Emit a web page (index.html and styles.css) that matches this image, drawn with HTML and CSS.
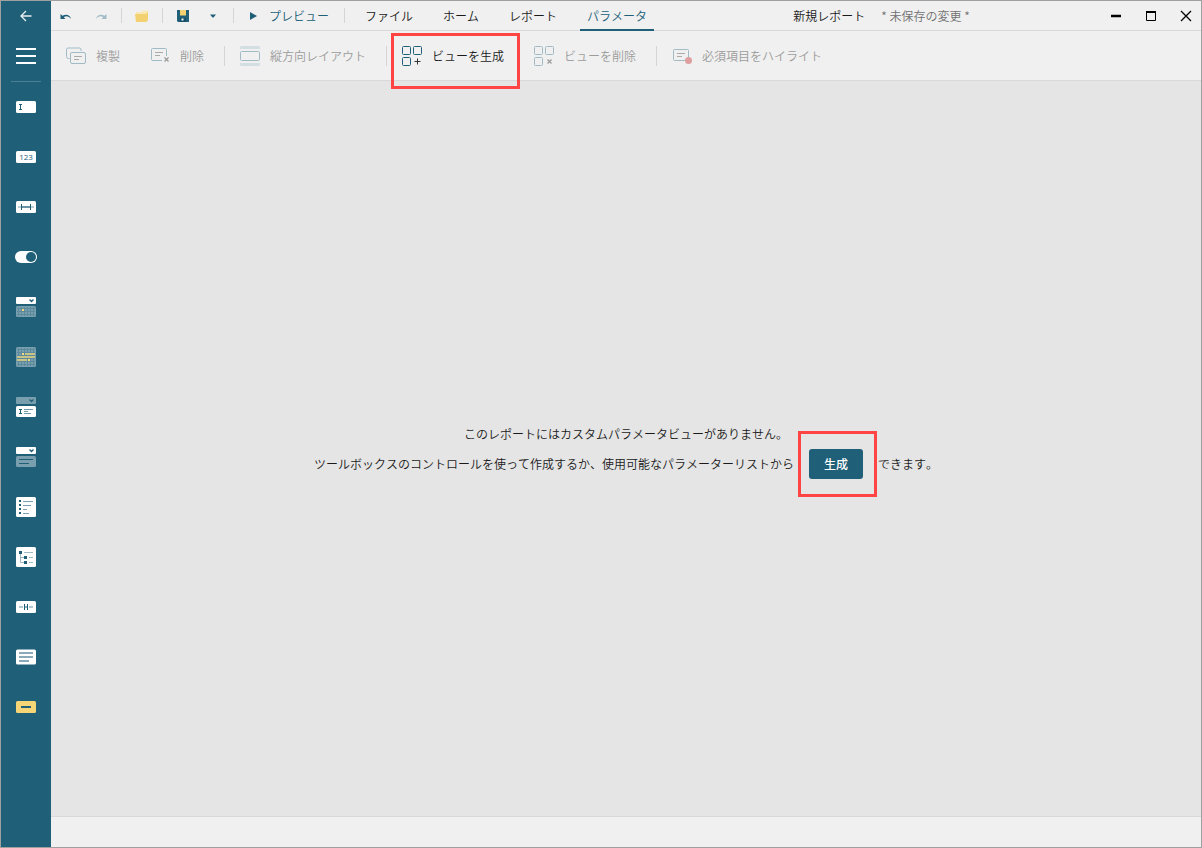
FILE: index.html
```html
<!DOCTYPE html>
<html lang="ja">
<head>
<meta charset="utf-8">
<title>新規レポート</title>
<meta name="viewport" content="width=device-width, initial-scale=1">
<link rel="stylesheet" href="styles.css">
</head>
<body>
<div class="app">
  <nav class="sidebar" aria-label="ツールボックス">
    <button class="back" type="button" aria-label="戻る">
      <svg width="12" height="12" viewBox="0 0 12 12" fill="none" stroke="#e8f0f3" stroke-width="1.3"><path d="M1 6h10.5M6 1L1 6l5 5"/></svg>
    </button>
    <button class="menu" type="button" aria-label="メニュー">
      <svg width="20" height="18" viewBox="0 0 20 18" fill="#fff"><path d="M0 1h20v2H0zM0 8h20v2H0zM0 15h20v2H0z"/></svg>
    </button>
    <hr class="divider">
    <button class="tool" type="button" aria-label="テキスト">
      <svg viewBox="0 0 22 22"><rect x="1" y="5" width="20" height="12" rx="1.5" fill="#fff"/><path d="M4 8.500h3M5.500 8.500v5M4 13.500h3" stroke="#205f78" fill="none"/></svg>
    </button>
    <button class="tool" type="button" aria-label="数値">
      <svg viewBox="0 0 22 22"><rect x="1" y="5" width="20" height="12" rx="1.5" fill="#fff"/><text class="digits" x="11" y="14" text-anchor="middle">123</text></svg>
    </button>
    <button class="tool" type="button" aria-label="範囲">
      <svg viewBox="0 0 22 22" fill="none"><rect x="1" y="5" width="20" height="12" rx="1.5" fill="#fff"/><path d="M3 11h16" stroke="#a5bfc9" stroke-width="1.5"/><path d="M6 11h10" stroke="#4d7f93" stroke-width="1.5"/><path d="M6.500 8v6M15.500 8v6" stroke="#205f78"/></svg>
    </button>
    <button class="tool" type="button" aria-label="ブール">
      <svg viewBox="0 0 22 22"><rect y="5" width="22" height="12" rx="6" fill="#fff"/><circle cx="16" cy="11" r="5" fill="#205f78"/></svg>
    </button>
    <button class="tool" type="button" aria-label="日付">
      <svg viewBox="0 0 22 22"><rect x="1" y="1" width="20" height="7" rx="1" fill="#fff"/><path d="M14.500 3.500l2 2 2-2" fill="none" stroke="#205f78" stroke-width="1.3"/><rect x="1" y="10" width="20" height="11" rx="1.5" fill="#799fae"/><path d="M2 12.500h18M2 15.500h18M2 18.500h18M3.500 11v9M6.500 11v9M9.500 11v9M12.500 11v9M15.500 11v9M18.500 11v9" stroke="#5d8b9e"/><path d="M7 13h2v2H7z" fill="#f6d577"/></svg>
    </button>
    <button class="tool" type="button" aria-label="日付範囲">
      <svg viewBox="0 0 22 22"><rect x="1" y="1" width="20" height="20" rx="1.5" fill="#799fae"/><path d="M2 3.500h18M2 6.500h18M2 9.500h18M2 12.500h18M2 15.500h18M2 18.500h18M3.500 2v18M6.500 2v18M9.500 2v18M12.500 2v18M15.500 2v18M18.500 2v18" stroke="#5d8b9e"/><path d="M10 7h10v2H10zM2 10h18v2H2zM2 13h10v2H2z" fill="#c8c489"/><path d="M7 7h2v2H7zM13 13h2v2h-2z" fill="#f9dc80"/></svg>
    </button>
    <button class="tool" type="button" aria-label="コンボボックス">
      <svg viewBox="0 0 22 22" fill="none"><rect x="1" y="1" width="20" height="7" rx="1" fill="#799fae"/><path d="M14.500 3.500l2 2 2-2" stroke="#205f78" stroke-width="1.3"/><rect x="1" y="10" width="20" height="11" rx="1.5" fill="#fff"/><path d="M4 13.500h3M5.500 13.500v4M4 17.500h3" stroke="#205f78"/><path d="M9 13.500h9M9 15.500h4M9 17.500h7" stroke="#7299a9"/></svg>
    </button>
    <button class="tool" type="button" aria-label="ドロップダウン">
      <svg viewBox="0 0 22 22" fill="none"><rect x="1" y="1" width="20" height="7" rx="1" fill="#fff"/><path d="M14.500 3.500l2 2 2-2" stroke="#205f78" stroke-width="1.3"/><rect x="1" y="10" width="20" height="11" rx="1.5" fill="#799fae"/><path d="M4 13.500h14M4 17.500h10" stroke="#205f78"/></svg>
    </button>
    <button class="tool" type="button" aria-label="リスト">
      <svg viewBox="0 0 22 22"><rect x="1" y="1" width="20" height="20" rx="1.5" fill="#fff"/><path d="M4 4h2v2H4zM4 8h2v2H4zM4 12h2v2H4zM4 16h2v2H4z" fill="#205f78"/><path d="M8 5.500h10M8 9.500h8M8 13.500h4M8 17.500h6" stroke="#7a9fae"/></svg>
    </button>
    <button class="tool" type="button" aria-label="ツリー">
      <svg viewBox="0 0 22 22"><rect x="1" y="1" width="20" height="20" rx="1.5" fill="#fff"/><path d="M9 6.500h9M5.500 8v8.500H9M5.500 11.500H9M14 11.500h4M14 16.500h4" stroke="#a0bbc6" fill="none"/><path d="M4 5h3v3H4zM9 10h3v3H9zM9 15h3v3H9z" fill="#205f78"/></svg>
    </button>
    <button class="tool" type="button" aria-label="範囲パネル">
      <svg viewBox="0 0 22 22"><rect x="1" y="5" width="20" height="12" rx="1.5" fill="#fff"/><path d="M4 11h4M14 11h4" stroke="#b3c9d1" stroke-width="2"/><path d="M9.500 8v6M12.500 8v6M9.500 11h3" stroke="#205f78"/></svg>
    </button>
    <button class="tool" type="button" aria-label="ラベル">
      <svg viewBox="0 0 22 22"><rect x="1" y="3.500" width="20" height="15" rx="1.5" fill="#fff"/><path d="M4 7h14M4 11h14M4 15h10" stroke="#8aaab8" stroke-width="2"/></svg>
    </button>
    <button class="tool" type="button" aria-label="ボタン">
      <svg viewBox="0 0 22 22"><rect x="1" y="5" width="20" height="12" rx="1.5" fill="#f6d577"/><path d="M6 11h10" stroke="#205f78" stroke-width="2"/></svg>
    </button>
  </nav>

  <div class="workspace">
    <header class="titlebar">
      <div class="quick">
        <button class="icon-btn" type="button" aria-label="元に戻す">
          <svg width="12" height="8" viewBox="0 0 12 8"><path d="M.500 2v5h5L3.800 5.200C6 3.600 9 4.300 11 7 10.500 3.500 6.500 1.200 2.500 3.800z" fill="#205f78"/></svg>
        </button>
        <button class="icon-btn spaced" type="button" aria-label="やり直し" disabled>
          <svg width="12" height="8" viewBox="0 0 12 8"><path d="M11.500 2v5h-5l1.700-1.800C6 3.600 3 4.300 1 7 1.500 3.500 5.500 1.200 9.500 3.800z" fill="#a3bcc7"/></svg>
        </button>
        <span class="sep"></span>
        <button class="icon-btn spaced" type="button" aria-label="開く">
          <svg width="14" height="14" viewBox="0 0 14 14"><path d="M1 5V3h5l2-1.500h5V9z" fill="#fae8b4"/><path d="M0 5h11l1.500-2H13v8l-1.500 2H1z" fill="#f4d170"/></svg>
        </button>
        <span class="sep"></span>
        <button class="icon-btn spaced" type="button" aria-label="保存">
          <svg width="12" height="12" viewBox="0 0 12 12"><path d="M0 0h12v12H1l-1-1z" fill="#205f78"/><path d="M3 0h6v5.500H3z" fill="#f4d170"/><path d="M3 8h6v4H3z" fill="#174f66"/><path d="M4.500 8.500h2v2h-2z" fill="#fff"/></svg>
        </button>
        <button class="icon-btn" type="button" aria-label="保存オプション">
          <svg width="6" height="4" viewBox="0 0 6 4"><path d="M0 .500h6L3.500 3.500h-1z" fill="#205f78"/></svg>
        </button>
        <span class="sep"></span>
        <button class="preview" type="button">
          <svg width="10" height="10" viewBox="0 0 10 10"><path d="M1 1l7 4-7 4z" fill="#205f78"/></svg>プレビュー</button>
        <span class="sep flush"></span>
      </div>
      <div class="tabs" role="tablist">
        <button class="tab" type="button" role="tab">ファイル</button>
        <button class="tab" type="button" role="tab">ホーム</button>
        <button class="tab" type="button" role="tab">レポート</button>
        <button class="tab active" type="button" role="tab" aria-selected="true">パラメータ</button>
      </div>
      <div class="doc"><span>新規レポート</span><span class="unsaved">* 未保存の変更 *</span></div>
      <div class="window-controls">
        <button class="icon-btn" type="button" aria-label="最小化">
          <svg width="12" height="12" viewBox="0 0 12 12"><path d="M1 6h10" stroke="#000" stroke-width="2.500"/></svg>
        </button>
        <button class="icon-btn" type="button" aria-label="最大化">
          <svg width="12" height="12" viewBox="0 0 12 12"><path d="M1.500 1.500h9v9h-9z" fill="none" stroke="#000"/><path d="M1 2h10" stroke="#000" stroke-width="2"/></svg>
        </button>
        <button class="icon-btn" type="button" aria-label="閉じる">
          <svg width="12" height="12" viewBox="0 0 12 12"><path d="M1 1l10 10M11 1L1 11" stroke="#000" stroke-width="1.300"/></svg>
        </button>
      </div>
    </header>

    <div class="toolbar" role="toolbar">
      <button class="action" type="button" disabled>
        <svg viewBox="0 0 20 20" fill="none"><path d="M3.500 12.500h-1a2 2 0 0 1-2-2v-7a1.500 1.500 0 0 1 1.500-1.500h11.500a1.500 1.500 0 0 1 1.500 1.500V5" stroke="#a0bbc6"/><rect x="4.500" y="6.500" width="15" height="11" rx="1.500" stroke="#a0bbc6"/><path d="M8 10.500h8M8 13.500h5" stroke="#aaa"/></svg>複製</button>
      <button class="action" type="button" disabled>
        <svg viewBox="0 0 20 20" fill="none"><path d="M12 14.500H2a1 1 0 0 1-.500-1V3.500a1 1 0 0 1 1-1H15.500a1 1 0 0 1 1 1V10" stroke="#a0bbc6"/><path d="M5 6.500h8M5 9.500h5" stroke="#aaa"/><path d="M14.500 11.500l4 4M18.500 11.500l-4 4" stroke="#999" stroke-width="1.200"/></svg>削除</button>
      <span class="sep"></span>
      <button class="action" type="button" disabled>
        <svg viewBox="0 0 20 20" fill="none"><path d="M1 0h18l1 1v2H0V1zM0 17h20v2l-1 1H1l-1-1z" fill="#d2dee2"/><rect x=".500" y="5.500" width="19" height="9" rx="1" stroke="#a0bbc6"/></svg>縦方向レイアウト</button>
      <span class="sep"></span>
      <button class="action enabled" type="button">
        <svg viewBox="0 0 20 20" fill="none" stroke="#205f78"><rect x=".500" y=".500" width="8" height="8" rx="1"/><rect x="11.500" y=".500" width="8" height="8" rx="1"/><rect x=".500" y="11.500" width="8" height="8" rx="1"/><path d="M15.500 12.500v6M12.500 15.500h6" stroke="#333"/></svg>ビューを生成<span class="callout callout-toolbar"></span></button>
      <button class="action" type="button" disabled>
        <svg viewBox="0 0 20 20" fill="none" stroke="#a0bbc6"><rect x=".500" y=".500" width="8" height="8" rx="1"/><rect x="11.500" y=".500" width="8" height="8" rx="1"/><rect x=".500" y="11.500" width="8" height="8" rx="1"/><path d="M13.500 13.500l4 4M17.500 13.500l-4 4" stroke="#999" stroke-width="1.200"/></svg>ビューを削除</button>
      <span class="sep"></span>
      <button class="action" type="button" disabled>
        <svg viewBox="0 0 20 20" fill="none"><rect x="1.500" y="3.500" width="15" height="11" rx="1" stroke="#a0bbc6"/><path d="M5 7.500h8M5 10.500h5" stroke="#aaa"/><circle cx="16.500" cy="14.500" r="3.500" fill="#df9fa1"/></svg>必須項目をハイライト</button>
    </div>

    <main class="canvas">
      <p class="message">このレポートにはカスタムパラメータビューがありません。</p>
      <p class="message"><span>ツールボックスのコントロールを使って作成するか、使用可能なパラメーターリストから</span><button class="generate" type="button">生成<span class="callout callout-generate"></span></button><span>できます。</span></p>
    </main>
    <footer class="statusbar"></footer>
  </div>
</div>
</body>
</html>
```

FILE: styles.css
```css
* {
  box-sizing: border-box;
}

body {
  margin: 0;
  font: 350 12px/18px "Noto Sans CJK JP", sans-serif;
  font-kerning: none;
  color: #1a1a1a;
}

button {
  display: flex;
  align-items: center;
  justify-content: center;
  padding: 0;
  border: 0;
  background: none;
  font: inherit;
  font-kerning: inherit;
  color: inherit;
  white-space: nowrap;
}

svg {
  display: block;
  flex: none;
}

.app {
  display: flex;
  min-height: 100vh;
  border: 1px solid #a0a0a0;
  background: #f0f0f0;
}

.sidebar {
  display: flex;
  flex: none;
  flex-direction: column;
  width: 50px;
  background: #205f78;
}

.back {
  height: 30px;
}

.menu {
  height: 50px;
}

.divider {
  width: 30px;
  height: 1px;
  margin: 0 auto;
  border: 0;
  background: #4a7f94;
}

.tool {
  height: 50px;
}

.tool svg {
  width: 22px;
  height: 22px;
}

.digits {
  font: 400 8px "Open Sans", sans-serif;
  fill: #205f78;
}

.workspace {
  display: flex;
  flex: 1;
  flex-direction: column;
  min-width: 0;
}

.titlebar {
  display: flex;
  height: 30px;
  border-bottom: 1px solid #d9d9d9;
}

.quick {
  display: flex;
  align-items: center;
}

.icon-btn {
  width: 30px;
  height: 30px;
}

.spaced {
  margin-left: 5px;
}

.sep {
  flex: none;
  width: 1px;
  height: 15px;
  margin-left: 5px;
  background: #d5d5d5;
}

.sep.flush {
  margin-left: 0;
}

.preview {
  gap: 10px;
  height: 30px;
  padding: 0 15px;
  color: #205f78;
}

.tabs {
  display: flex;
  gap: 16px;
  margin-left: 13px;
}

.tab {
  height: 30px;
  padding: 2px 7px 0;
  border-bottom: 2px solid transparent;
}

.tab.active {
  border-bottom-color: #205f78;
  color: #205f78;
}

.doc {
  display: flex;
  flex: 1;
  align-items: center;
  justify-content: center;
  gap: 16px;
  padding-left: 8px;
  white-space: nowrap;
}

.unsaved {
  color: #707070;
}

.window-controls {
  display: flex;
  gap: 5px;
}

.toolbar {
  display: flex;
  align-items: center;
  height: 50px;
  border-bottom: 1px solid #d9d9d9;
}

.toolbar .sep {
  height: 20px;
}

.action {
  position: relative;
  gap: 10px;
  height: 50px;
  padding: 0 15px;
  color: #9c9c9c;
}

.action.enabled {
  color: #1a1a1a;
}

.action svg {
  width: 20px;
  height: 20px;
}

.callout {
  position: absolute;
  border: 3px solid #ff4444;
  pointer-events: none;
}

.callout-toolbar {
  inset: 2px -1px -8px 4px;
}

.callout-generate {
  inset: -18px -14px -18px -11px;
}

.canvas {
  display: flex;
  flex: 1;
  flex-direction: column;
  align-items: center;
  justify-content: center;
  background: #e5e5e5;
}

.message {
  display: flex;
  align-items: center;
  gap: 15px;
  height: 30px;
  margin: 0;
}

.generate {
  position: relative;
  height: 30px;
  padding: 0 15px;
  border-radius: 3px;
  background: #205f78;
  color: #fff;
  font-weight: 500;
}

.statusbar {
  height: 31px;
  border-top: 1px solid #d9d9d9;
}
```
